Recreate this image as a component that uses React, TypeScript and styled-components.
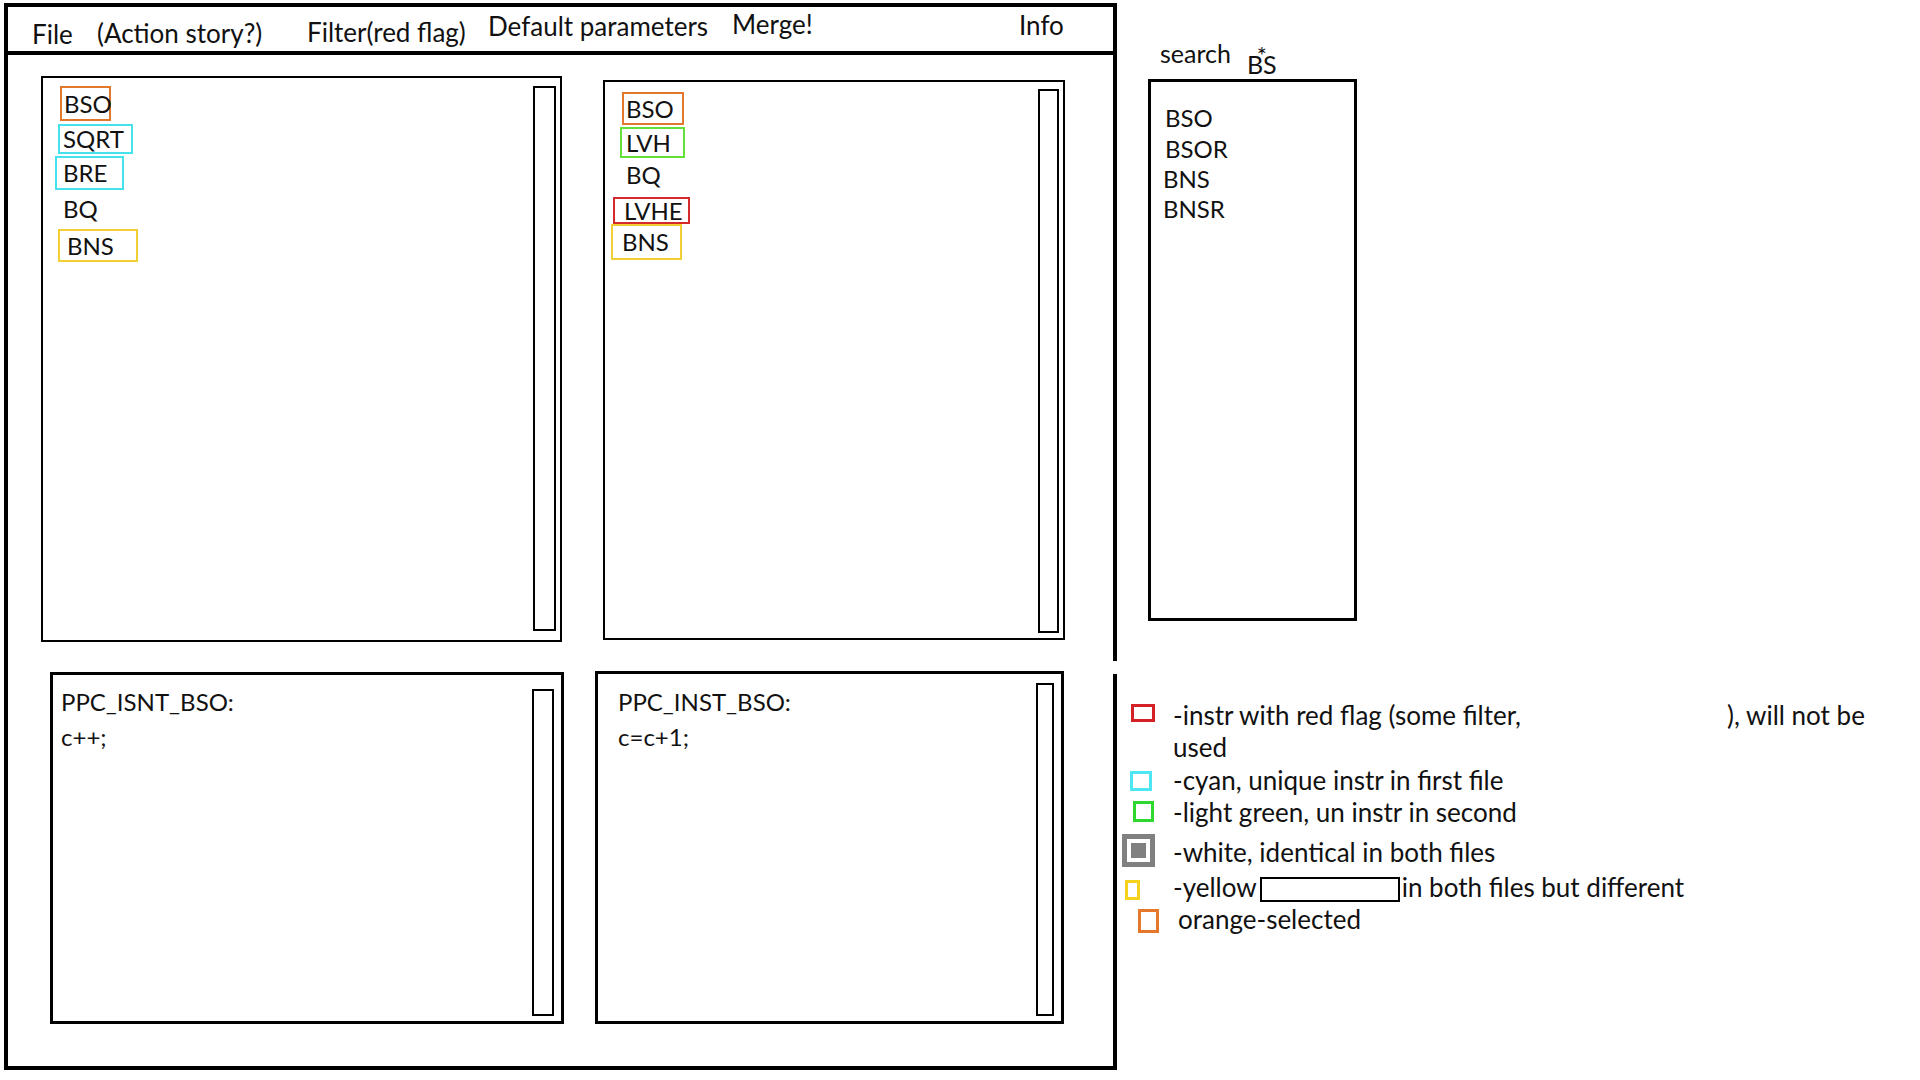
import styled, { createGlobalStyle } from "styled-components";

const GlobalStyle = createGlobalStyle`
  body {
    margin: 0;
    background: #fff;
    color: #111;
    font-family: Lato, "Noto Sans", sans-serif;
  }
`;

const colors = {
	orange: "#e2782c",
	cyan: "#45e2ee",
	yellow: "#f2cf34",
	green: "#64e03a",
	red: "#d42a2a",
};

const Page = styled.div`
	display: flex;
	align-items: flex-start;
	width: 1920px;
	height: 1080px;
	padding: 3px 0 0 4px;
	box-sizing: border-box;
	overflow: hidden;
`;

const Frame = styled.div`
	position: relative;
	width: 1113px;
	height: 1067px;
	flex-shrink: 0;
	border: 4px solid #000;
	box-sizing: border-box;
	display: flex;
	flex-direction: column;
	/* the sketch's right edge has a small gap in it */
	&::after {
		content: "";
		position: absolute;
		right: -4px;
		top: 654px;
		width: 4px;
		height: 13px;
		background: #fff;
	}
`;

const MenuBar = styled.div`
	height: 48px;
	box-sizing: border-box;
	border-bottom: 4px solid #000;
	display: grid;
	grid-template-columns: 65px 210px 181px 244px 287px auto;
	align-items: start;
	padding-left: 24px;
`;

const MenuItem = styled.span<{ $dy: number }>`
	margin-top: ${(p) => p.$dy}px;
	font-size: 26px;
	line-height: 30px;
	white-space: nowrap;
`;

const Workspace = styled.div`
	display: grid;
	grid-template-columns: 554px 470px;
	grid-template-rows: 566px 353px;
	row-gap: 29px;
	margin: 21px 0 0 33px;
`;

const Panel = styled.div<{ $x: number; $y: number; $w: number; $h: number; $bw: number }>`
	margin-left: ${(p) => p.$x}px;
	margin-top: ${(p) => p.$y}px;
	width: ${(p) => p.$w}px;
	height: ${(p) => p.$h}px;
	border: ${(p) => p.$bw}px solid #000;
	box-sizing: border-box;
	display: flex;
`;

const List = styled.div<{ $pt: number }>`
	flex: 1;
	display: flex;
	flex-direction: column;
	align-items: flex-start;
	padding-top: ${(p) => p.$pt}px;
`;

const Item = styled.div<{ $c?: string; $x: number; $y: number; $w?: number; $h: number; $pl: number }>`
	display: flex;
	align-items: center;
	box-sizing: border-box;
	border: 2px solid ${(p) => p.$c ?? "transparent"};
	margin-left: ${(p) => p.$x}px;
	margin-top: ${(p) => p.$y}px;
	width: ${(p) => (p.$w ? `${p.$w}px` : "auto")};
	height: ${(p) => p.$h}px;
	padding-left: ${(p) => p.$pl}px;
	font-size: 24px;
	line-height: 1;
`;

const ScrollBar = styled.div<{ $t: number; $b: number; $r: number; $w: number }>`
	flex-shrink: 0;
	width: ${(p) => p.$w}px;
	margin: ${(p) => `${p.$t}px ${p.$r}px ${p.$b}px 0`};
	border: 2px solid #000;
	box-sizing: border-box;
`;

const CodePane = styled.div<{ $pl: number; $pt: number }>`
	flex: 1;
	padding: ${(p) => `${p.$pt}px 0 0 ${p.$pl}px`};
	font-size: 24px;
	line-height: 35px;
`;

const Side = styled.div`
	display: flex;
	flex-direction: column;
	padding-top: 35px;
`;

const SearchHead = styled.div`
	display: flex;
	align-items: flex-start;
	gap: 16px;
	height: 41px;
	margin-left: 43px;
	font-size: 25px;
	line-height: 30px;
`;

const Wildcard = styled.span`
	position: relative;
	margin-top: 11px;
	&::before {
		content: "*";
		position: absolute;
		left: 50%;
		top: -4px;
		transform: translateX(-50%);
		font-size: 24px;
		line-height: 20px;
	}
`;

const SearchBox = styled.div`
	width: 209px;
	height: 542px;
	margin-left: 31px;
	border: 3px solid #000;
	box-sizing: border-box;
	padding-top: 25px;
	display: flex;
	flex-direction: column;
`;

const Result = styled.div<{ $x: number; $y: number }>`
	margin: ${(p) => `${p.$y}px 0 0 ${p.$x}px`};
	font-size: 24px;
	line-height: 22px;
`;

const Legend = styled.div`
	display: flex;
	flex-direction: column;
	margin-top: 78px;
`;

const LegendRow = styled.div<{ $h: number; $lh: number }>`
	display: grid;
	grid-template-columns: 56px auto;
	align-items: start;
	height: ${(p) => p.$h}px;
	font-size: 26px;
	line-height: ${(p) => p.$lh}px;
	white-space: nowrap;
`;

const Swatch = styled.div<{ $c: string; $x: number; $y: number; $w: number; $h: number }>`
	margin: ${(p) => `${p.$y}px 0 0 ${p.$x}px`};
	width: ${(p) => p.$w}px;
	height: ${(p) => p.$h}px;
	border: 3px solid ${(p) => p.$c};
	box-sizing: border-box;
`;

const SameSwatch = styled.div`
	margin: -1px 0 0 5px;
	width: 33px;
	height: 33px;
	background: #808080;
	box-shadow: inset 0 0 0 5px #808080, inset 0 0 0 9px #fff;
`;

const LegendText = styled.div<{ $pl?: number }>`
	padding-left: ${(p) => p.$pl ?? 0}px;
`;

const Spacer = styled.span<{ $w: number }>`
	display: inline-block;
	width: ${(p) => p.$w}px;
`;

const BlankField = styled.span`
	display: inline-block;
	vertical-align: top;
	width: 140px;
	height: 25px;
	margin: 5px 2px 0 3px;
	border: 2px solid #000;
	box-sizing: border-box;
`;

const menu = [
	{ label: "File", dy: 12 },
	{ label: "(Action story?)", dy: 11 },
	{ label: "Filter(red flag)", dy: 10 },
	{ label: "Default parameters", dy: 4 },
	{ label: "Merge!", dy: 2 },
	{ label: "Info", dy: 3 },
];

const firstFile = [
	{ label: "BSO", c: colors.orange, x: 17, y: 0, w: 51, h: 35, pl: 2 },
	{ label: "SQRT", c: colors.cyan, x: 15, y: 3, w: 75, h: 30, pl: 3 },
	{ label: "BRE", c: colors.cyan, x: 12, y: 2, w: 69, h: 34, pl: 6 },
	{ label: "BQ", x: 18, y: 2, h: 34, pl: 0 },
	{ label: "BNS", c: colors.yellow, x: 15, y: 3, w: 80, h: 33, pl: 7 },
];

const secondFile = [
	{ label: "BSO", c: colors.orange, x: 17, y: 0, w: 62, h: 33, pl: 2 },
	{ label: "LVH", c: colors.green, x: 15, y: 2, w: 65, h: 31, pl: 4 },
	{ label: "BQ", x: 19, y: 2, h: 30, pl: 0 },
	{ label: "LVHE", c: colors.red, x: 8, y: 7, w: 77, h: 27, pl: 9 },
	{ label: "BNS", c: colors.yellow, x: 6, y: 0, w: 71, h: 36, pl: 9 },
];

const results = [
	{ label: "BSO", x: 14, y: 0 },
	{ label: "BSOR", x: 14, y: 9 },
	{ label: "BNS", x: 12, y: 8 },
	{ label: "BNSR", x: 12, y: 8 },
];

type Entry = { label: string; c?: string; x: number; y: number; w?: number; h: number; pl: number };

function InstrList({ items, pt }: { items: Entry[]; pt: number }) {
	return (
		<List $pt={pt}>
			{items.map((it) => (
				<Item key={it.label} $c={it.c} $x={it.x} $y={it.y} $w={it.w} $h={it.h} $pl={it.pl}>
					{it.label}
				</Item>
			))}
		</List>
	);
}

function App() {
	return (
		<>
			<GlobalStyle />
			<Page>
				<Frame>
					<MenuBar>
						{menu.map((m) => (
							<MenuItem key={m.label} $dy={m.dy}>
								{m.label}
							</MenuItem>
						))}
					</MenuBar>
					<Workspace>
						<Panel $x={0} $y={0} $w={521} $h={566} $bw={2}>
							<InstrList items={firstFile} pt={8} />
							<ScrollBar $t={8} $b={9} $r={4} $w={23} />
						</Panel>
						<Panel $x={8} $y={4} $w={462} $h={560} $bw={2}>
							<InstrList items={secondFile} pt={10} />
							<ScrollBar $t={7} $b={5} $r={4} $w={21} />
						</Panel>
						<Panel $x={9} $y={1} $w={514} $h={352} $bw={3}>
							<CodePane $pl={8} $pt={9}>
								PPC_ISNT_BSO:
								<br />
								c++;
							</CodePane>
							<ScrollBar $t={14} $b={5} $r={7} $w={22} />
						</Panel>
						<Panel $x={0} $y={0} $w={469} $h={353} $bw={3}>
							<CodePane $pl={20} $pt={10}>
								PPC_INST_BSO:
								<br />
								c=c+1;
							</CodePane>
							<ScrollBar $t={9} $b={5} $r={7} $w={18} />
						</Panel>
					</Workspace>
				</Frame>

				<Side>
					<SearchHead>
						<span>search</span>
						<Wildcard>BS</Wildcard>
					</SearchHead>
					<SearchBox>
						{results.map((r) => (
							<Result key={r.label} $x={r.x} $y={r.y}>
								{r.label}
							</Result>
						))}
					</SearchBox>

					<Legend>
						<LegendRow $h={64} $lh={32}>
							<Swatch $c="#d42027" $x={14} $y={5} $w={24} $h={18} />
							<LegendText>
								-instr with red flag (some filter,
								<Spacer $w={206} />
								), will not be
								<br />
								used
							</LegendText>
						</LegendRow>
						<LegendRow $h={32} $lh={34}>
							<Swatch $c="#4de6f2" $x={13} $y={8} $w={22} $h={20} />
							<LegendText>-cyan, unique instr in first file</LegendText>
						</LegendRow>
						<LegendRow $h={40} $lh={34}>
							<Swatch $c="#2ed82e" $x={16} $y={6} $w={21} $h={21} />
							<LegendText $pl={-1}>-light green, un instr in second</LegendText>
						</LegendRow>
						<LegendRow $h={37} $lh={34}>
							<SameSwatch />
							<LegendText>-white, identical in both files</LegendText>
						</LegendRow>
						<LegendRow $h={27} $lh={30}>
							<Swatch $c="#f5d21c" $x={8} $y={8} $w={15} $h={20} />
							<LegendText>
								-yellow
								<BlankField />
								in both files but different
							</LegendText>
						</LegendRow>
						<LegendRow $h={30} $lh={40}>
							<Swatch $c="#e5782a" $x={21} $y={10} $w={21} $h={24} />
							<LegendText $pl={5}>orange-selected</LegendText>
						</LegendRow>
					</Legend>
				</Side>
			</Page>
		</>
	);
}

export default App;
